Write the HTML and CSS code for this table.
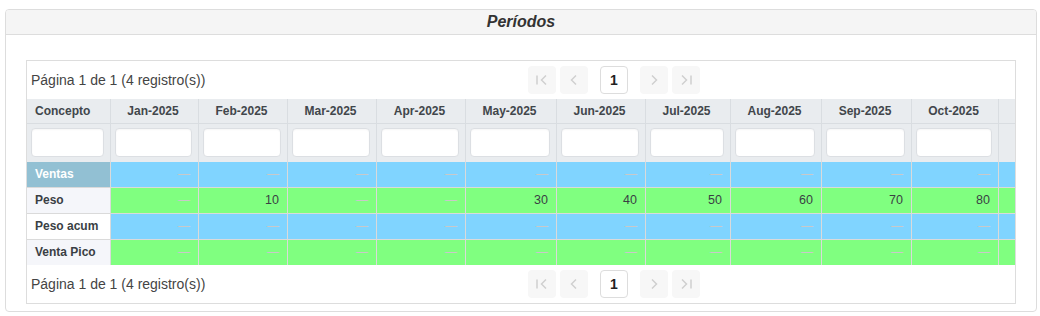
FILE: index.html
```html
<!DOCTYPE html>
<html lang="es">
<head>
<meta charset="utf-8">
<title>Períodos</title>
<link rel="stylesheet" href="styles.css">
</head>
<body>
<div class="panel">
  <div class="panel-head">Períodos</div>
  <div class="panel-body">
    <div class="grid">
      <div class="pager">
        <div class="info">Página 1 de 1 (4 registro(s))</div>
        <div class="pages">
          <span class="pbtn dis"><svg width="28" height="28" viewBox="0 0 28 28"><path d="M9 9.5v9M18 9.5l-4.5 4.5 4.5 4.5" fill="none" stroke="#cfcfcf" stroke-width="1.5"/></svg></span>
          <span class="pbtn dis"><svg width="28" height="28" viewBox="0 0 28 28"><path d="M16 9.5l-4.5 4.5 4.5 4.5" fill="none" stroke="#cfcfcf" stroke-width="1.5"/></svg></span>
          <span class="pbtn cur">1</span>
          <span class="pbtn dis"><svg width="28" height="28" viewBox="0 0 28 28"><path d="M12 9.5l4.5 4.5-4.5 4.5" fill="none" stroke="#cfcfcf" stroke-width="1.5"/></svg></span>
          <span class="pbtn dis"><svg width="28" height="28" viewBox="0 0 28 28"><path d="M10 9.5l4.5 4.5-4.5 4.5M19 9.5v9" fill="none" stroke="#cfcfcf" stroke-width="1.5"/></svg></span>
        </div>
      </div>

      <div class="row head">
        <div class="c first">Concepto</div><div class="c">Jan-2025</div><div class="c">Feb-2025</div><div class="c">Mar-2025</div><div class="c">Apr-2025</div><div class="c">May-2025</div><div class="c">Jun-2025</div><div class="c">Jul-2025</div><div class="c">Aug-2025</div><div class="c">Sep-2025</div><div class="c">Oct-2025</div><div class="c last"></div>
      </div>
      <div class="row filter">
        <div class="c"><span class="inp"></span></div><div class="c"><span class="inp"></span></div><div class="c"><span class="inp"></span></div><div class="c"><span class="inp"></span></div><div class="c"><span class="inp"></span></div><div class="c"><span class="inp"></span></div><div class="c"><span class="inp"></span></div><div class="c"><span class="inp"></span></div><div class="c"><span class="inp"></span></div><div class="c"><span class="inp"></span></div><div class="c"><span class="inp"></span></div><div class="c last"></div>
      </div>

      <div class="row data blue">
        <div class="c lbl lbl-main">Ventas</div><div class="c d">—</div><div class="c d">—</div><div class="c d">—</div><div class="c d">—</div><div class="c d">—</div><div class="c d">—</div><div class="c d">—</div><div class="c d">—</div><div class="c d">—</div><div class="c d">—</div><div class="c last"></div>
      </div>
      <div class="row data green">
        <div class="c lbl lbl-alt">Peso</div><div class="c d">—</div><div class="c v">10</div><div class="c d">—</div><div class="c d">—</div><div class="c v">30</div><div class="c v">40</div><div class="c v">50</div><div class="c v">60</div><div class="c v">70</div><div class="c v">80</div><div class="c last"></div>
      </div>
      <div class="row data blue">
        <div class="c lbl">Peso acum</div><div class="c d">—</div><div class="c d">—</div><div class="c d">—</div><div class="c d">—</div><div class="c d">—</div><div class="c d">—</div><div class="c d">—</div><div class="c d">—</div><div class="c d">—</div><div class="c d">—</div><div class="c last"></div>
      </div>
      <div class="row data green end">
        <div class="c lbl lbl-alt">Venta Pico</div><div class="c d">—</div><div class="c d">—</div><div class="c d">—</div><div class="c d">—</div><div class="c d">—</div><div class="c d">—</div><div class="c d">—</div><div class="c d">—</div><div class="c d">—</div><div class="c d">—</div><div class="c last"></div>
      </div>

      <div class="pager">
        <div class="info">Página 1 de 1 (4 registro(s))</div>
        <div class="pages">
          <span class="pbtn dis"><svg width="28" height="28" viewBox="0 0 28 28"><path d="M9 9.5v9M18 9.5l-4.5 4.5 4.5 4.5" fill="none" stroke="#cfcfcf" stroke-width="1.5"/></svg></span>
          <span class="pbtn dis"><svg width="28" height="28" viewBox="0 0 28 28"><path d="M16 9.5l-4.5 4.5 4.5 4.5" fill="none" stroke="#cfcfcf" stroke-width="1.5"/></svg></span>
          <span class="pbtn cur">1</span>
          <span class="pbtn dis"><svg width="28" height="28" viewBox="0 0 28 28"><path d="M12 9.5l4.5 4.5-4.5 4.5" fill="none" stroke="#cfcfcf" stroke-width="1.5"/></svg></span>
          <span class="pbtn dis"><svg width="28" height="28" viewBox="0 0 28 28"><path d="M10 9.5l4.5 4.5-4.5 4.5M19 9.5v9" fill="none" stroke="#cfcfcf" stroke-width="1.5"/></svg></span>
        </div>
      </div>
    </div>
  </div>
</div>
</body>
</html>
```
FILE: styles.css
```css
* { box-sizing: border-box; }
html, body { margin: 0; padding: 0; background: #fff; }
body {
  font-family: "Liberation Sans", Arial, sans-serif;
  color: #333;
  padding: 9px 4px 0 5px;
}
.panel {
  width: 1032px;
  border: 1px solid #ddd;
  border-radius: 4px;
  background: #fff;
}
.panel-head {
  height: 25px;
  background: #f5f5f5;
  border-bottom: 1px solid #ddd;
  border-radius: 3px 3px 0 0;
  text-align: center;
  font-size: 16px;
  font-weight: bold;
  font-style: italic;
  line-height: 23px;
  color: #333;
}
.panel-body {
  padding: 25px 20px 7px 20px;
}
.grid {
  width: 990px;
  border: 1px solid #ddd;
}
.pager {
  height: 38px;
  display: grid;
  grid-template-columns: 501px auto;
  align-items: center;
}
.info {
  padding-left: 4px;
  font-size: 14px;
  color: #444;
}
.pages {
  display: flex;
  align-items: center;
  height: 28px;
}
.pbtn {
  width: 28px;
  height: 28px;
  border-radius: 4px;
  display: flex;
  align-items: center;
  justify-content: center;
}
.pbtn.dis { background: #f7f7f7; }
.pbtn + .pbtn { margin-left: 4px; }
.pbtn.cur {
  margin-left: 12px;
  margin-right: 8px;
  border: 1px solid #ddd;
  background: #fff;
  font-size: 14px;
  font-weight: bold;
  color: #222;
}
.row {
  display: grid;
  grid-template-columns: 84px 88px 89px 89px 89px 91px 89px 85px 91px 90px 87px 16px;
}
.c {
  border-right: 1px solid #d9dde1;
  font-size: 12px;
  overflow: hidden;
  white-space: nowrap;
}
.c.last { border-right: none; }
.head {
  height: 25px;
  background: #e9ecef;
  border-bottom: 1px solid #d9dde1;
}
.head .c {
  font-weight: bold;
  color: #41464b;
  text-align: center;
  line-height: 24px;
  padding-right: 3px;
}
.head .c.first {
  text-align: left;
  padding-left: 8px;
}
.filter {
  height: 38px;
  background: #e9ecef;
}
.filter .c {
  padding: 4px 6px 0 4px;
}
.inp {
  display: block;
  height: 29px;
  background: #fff;
  border: 1px solid #dcdfe3;
  border-radius: 4px;
  box-shadow: inset 0 1px 2px rgba(0,0,0,0.04);
}
.data {
  height: 26px;
  border-bottom: 1px solid #dadada;
}
.data.end { height: 25px; border-bottom: none; }
.data .c {
  border-right-color: #dadada;
  line-height: 25px;
}
.blue { background: #80d4ff; }
.green { background: #80ff80; }
.d, .v {
  text-align: right;
  padding-right: 8px;
}
.d { color: #c9c9c9; }
.v { color: #3a3f44; font-size: 12.5px; }
.lbl {
  background: #fff;
  font-weight: bold;
  color: #3a3f44;
  padding-left: 8px;
}
.lbl-alt { background: #f5f6fa; }
.lbl-main { background: #92c0d3; color: #fff; }
```
